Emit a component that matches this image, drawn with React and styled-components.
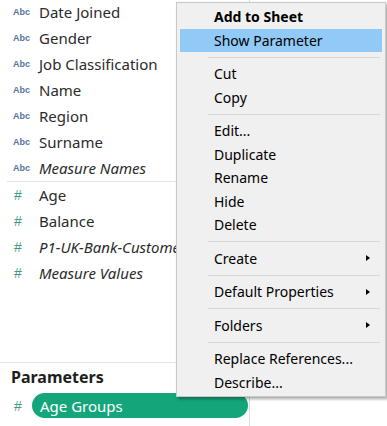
import React from "react";
import styled, { createGlobalStyle } from "styled-components";

const Global = createGlobalStyle`
  html, body { margin: 0; padding: 0; background: #fff; overflow: hidden; }
  body { font-family: "Noto Sans", "Open Sans", sans-serif; }
`;

const Page = styled.div`
  position: relative;
  width: 387px;
  height: 426px;
  display: flex;
  background: #fff;
  overflow: hidden;
`;

const DataPane = styled.div`
  width: 250px;
  height: 100%;
  border-right: 1px solid #dcdcdc;
  display: flex;
  flex-direction: column;
  box-sizing: border-box;
  overflow: hidden;
`;

const FieldList = styled.div`
  display: flex;
  flex-direction: column;
  margin-top: -1px;
  flex: 1;
`;

const Field = styled.div`
  height: 26px;
  max-width: 177px;
  overflow: hidden;
  display: flex;
  align-items: center;
  white-space: nowrap;
`;

const TypeIcon = styled.span`
  width: 39px;
  flex: none;
  box-sizing: border-box;
  padding-left: ${(p) => (p.$num ? "14px" : "13px")};
  font-family: "Liberation Sans", Arial, sans-serif;
  font-size: ${(p) => (p.$num ? "14px" : "9px")};
  font-weight: ${(p) => (p.$num ? "normal" : "bold")};
  color: ${(p) => (p.$num ? "#3f9c7f" : "#5574a0")};
`;

const FieldName = styled.span`
  font-family: "Noto Sans", sans-serif;
  font-size: 15px;
  color: #2b2b2b;
  font-style: ${(p) => (p.$italic ? "italic" : "normal")};
`;

const Divider = styled.div`
  height: 1px;
  background: #e3e3e3;
  margin: 0 0 0 7px;
`;

const ParamSection = styled.div`
  border-top: 1px solid #e3e3e3;
  padding: 3px 0 8px;
  display: flex;
  flex-direction: column;
`;

const SectionTitle = styled.div`
  font-family: "Noto Sans", sans-serif;
  font-weight: bold;
  font-size: 16px;
  color: #1e1e1e;
  padding-left: 11px;
  height: 22px;
  line-height: 22px;
`;

const ParamRow = styled.div`
  display: flex;
  align-items: center;
  margin-top: 5px;
  height: 25px;
`;

const ParamHash = styled.span`
  width: 32px;
  flex: none;
  box-sizing: border-box;
  padding-left: 14px;
  font-family: "Liberation Sans", Arial, sans-serif;
  font-size: 14px;
  color: #3f9c7f;
`;

const Pill = styled.div`
  width: 216px;
  height: 25px;
  border-radius: 13px;
  background: #14a67a;
  color: #fff;
  font-family: "Noto Sans", sans-serif;
  font-size: 15px;
  display: flex;
  align-items: center;
  padding-left: 8px;
  box-sizing: border-box;
`;

const Menu = styled.div`
  position: absolute;
  left: 176px;
  top: 2px;
  width: 210px;
  box-sizing: border-box;
  background: #f0f0f0;
  border: 1px solid #c8c8c8;
  box-shadow: 2px 2px 3px rgba(0, 0, 0, 0.35);
  padding: 2px 3px 2px 3px;
  display: flex;
  flex-direction: column;
`;

const MenuItem = styled.div`
  height: 23.5px;
  display: flex;
  align-items: center;
  padding-left: 34px;
  padding-right: 12px;
  font-family: "Noto Sans", sans-serif;
  font-size: 14px;
  color: #000;
  font-weight: ${(p) => (p.$bold ? "bold" : "normal")};
  background: ${(p) => (p.$active ? "#91c9f7" : "transparent")};
  white-space: nowrap;
`;

const ItemLabel = styled.span`
  flex: 1;
`;

const Arrow = styled.span`
  width: 0;
  height: 0;
  border-top: 3.5px solid transparent;
  border-bottom: 3.5px solid transparent;
  border-left: 4px solid #000;
`;

const Sep = styled.div`
  height: 10px;
  display: flex;
  align-items: center;
  padding: 0 2px 0 28px;
  &::after {
    content: "";
    flex: 1;
    height: 1px;
    background: #d7d7d7;
  }
`;

const dims = ["Date Joined", "Gender", "Job Classification", "Name", "Region", "Surname"];
const measures = [
  { n: "Age" },
  { n: "Balance" },
  { n: "P1-UK-Bank-Customers (Count)", i: true },
  { n: "Measure Values", i: true },
];

const menu = [
  { t: "Add to Sheet", b: true },
  { t: "Show Parameter", a: true },
  "sep",
  { t: "Cut" },
  { t: "Copy" },
  "sep",
  { t: "Edit..." },
  { t: "Duplicate" },
  { t: "Rename" },
  { t: "Hide" },
  { t: "Delete" },
  "sep",
  { t: "Create", s: true },
  "sep",
  { t: "Default Properties", s: true },
  "sep",
  { t: "Folders", s: true },
  "sep",
  { t: "Replace References..." },
  { t: "Describe..." },
];

export default function App() {
  return (
    <>
      <Global />
      <Page>
        <DataPane>
          <FieldList>
            {dims.map((d) => (
              <Field key={d}>
                <TypeIcon>Abc</TypeIcon>
                <FieldName>{d}</FieldName>
              </Field>
            ))}
            <Field>
              <TypeIcon>Abc</TypeIcon>
              <FieldName $italic>Measure Names</FieldName>
            </Field>
            <Divider />
            {measures.map((m) => (
              <Field key={m.n}>
                <TypeIcon $num>#</TypeIcon>
                <FieldName $italic={m.i}>{m.n}</FieldName>
              </Field>
            ))}
          </FieldList>
          <ParamSection>
            <SectionTitle>Parameters</SectionTitle>
            <ParamRow>
              <ParamHash>#</ParamHash>
              <Pill>Age Groups</Pill>
            </ParamRow>
          </ParamSection>
        </DataPane>
        <Menu>
          {menu.map((m, i) =>
            m === "sep" ? (
              <Sep key={i} />
            ) : (
              <MenuItem key={i} $bold={m.b} $active={m.a}>
                <ItemLabel>{m.t}</ItemLabel>
                {m.s && <Arrow />}
              </MenuItem>
            )
          )}
        </Menu>
      </Page>
    </>
  );
}
